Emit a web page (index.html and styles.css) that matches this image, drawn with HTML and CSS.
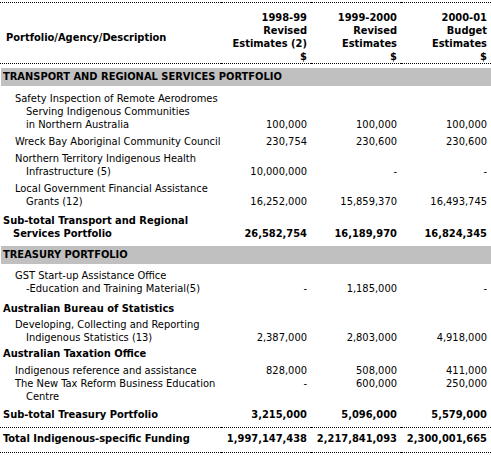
FILE: index.html
```html
<!DOCTYPE html>
<html lang="en">
<head>
  <meta charset="UTF-8">
  <title>Indigenous-specific Funding</title>
  <link rel="stylesheet" href="styles.css">
</head>
<body>
  <table class="funding">
    <colgroup>
      <col class="col-desc">
      <col class="col-num">
      <col class="col-num">
      <col class="col-num">
    </colgroup>
    <thead>
      <tr class="head">
        <th class="desc">Portfolio/Agency/Description</th>
        <th>1998-99<br>Revised<br>Estimates (2)<br>$</th>
        <th>1999-2000<br>Revised<br>Estimates<br>$</th>
        <th>2000-01<br>Budget<br>Estimates<br>$</th>
      </tr>
    </thead>
    <tbody>
      <tr class="band gap4">
        <td colspan="4"><div>TRANSPORT AND REGIONAL SERVICES PORTFOLIO</div></td>
      </tr>
      <tr class="gap6">
        <td class="desc">Safety Inspection of Remote Aerodromes<br>Serving Indigenous Communities<br>in Northern Australia</td>
        <td>100,000</td>
        <td>100,000</td>
        <td>100,000</td>
      </tr>
      <tr class="gap4">
        <td class="desc">Wreck Bay Aboriginal Community Council</td>
        <td>230,754</td>
        <td>230,600</td>
        <td>230,600</td>
      </tr>
      <tr class="gap4">
        <td class="desc">Northern Territory Indigenous Health<br>Infrastructure (5)</td>
        <td>10,000,000</td>
        <td>-</td>
        <td>-</td>
      </tr>
      <tr class="gap4">
        <td class="desc">Local Government Financial Assistance<br>Grants (12)</td>
        <td>16,252,000</td>
        <td>15,859,370</td>
        <td>16,493,745</td>
      </tr>
      <tr class="subtotal gap6">
        <td class="desc">Sub-total Transport and Regional<br>Services Portfolio</td>
        <td>26,582,754</td>
        <td>16,189,970</td>
        <td>16,824,345</td>
      </tr>
      <tr class="band gap6">
        <td colspan="4"><div>TREASURY PORTFOLIO</div></td>
      </tr>
      <tr class="gap5">
        <td class="desc">GST Start-up Assistance Office<br>-Education and Training Material(5)</td>
        <td>-</td>
        <td>1,185,000</td>
        <td>-</td>
      </tr>
      <tr class="agency gap7">
        <td class="desc" colspan="4">Australian Bureau of Statistics</td>
      </tr>
      <tr class="gap3">
        <td class="desc">Developing, Collecting and Reporting<br>Indigenous Statistics (13)</td>
        <td>2,387,000</td>
        <td>2,803,000</td>
        <td>4,918,000</td>
      </tr>
      <tr class="agency gap3">
        <td class="desc" colspan="4">Australian Taxation Office</td>
      </tr>
      <tr class="gap4">
        <td class="desc">Indigenous reference and assistance</td>
        <td>828,000</td>
        <td>508,000</td>
        <td>411,000</td>
      </tr>
      <tr>
        <td class="desc">The New Tax Reform Business Education<br>Centre</td>
        <td class="top">-</td>
        <td class="top">600,000</td>
        <td class="top">250,000</td>
      </tr>
      <tr class="subtotal gap5 last">
        <td class="desc">Sub-total Treasury Portfolio</td>
        <td>3,215,000</td>
        <td>5,096,000</td>
        <td>5,579,000</td>
      </tr>
    </tbody>
    <tfoot>
      <tr class="total">
        <td class="desc">Total Indigenous-specific Funding</td>
        <td>1,997,147,438</td>
        <td>2,217,841,093</td>
        <td>2,300,001,665</td>
      </tr>
    </tfoot>
  </table>
</body>
</html>
```

FILE: styles.css
```css
body {
  margin: 0;
  background: #fff;
  color: #000;
  font-family: "DejaVu Sans Condensed", "DejaVu Sans", sans-serif;
  font-size: 11px;
  line-height: 13px;
}

.funding {
  width: 491px;
  margin-top: 2px;
  border-collapse: collapse;
  table-layout: fixed;
}

.col-desc { width: 221px; }
.col-num { width: 90px; }

th, td {
  padding: 0 4px 0 0;
  text-align: right;
  vertical-align: bottom;
  font-weight: normal;
  white-space: nowrap;
}

td.top { vertical-align: top; }

/* header */
.head th {
  font-weight: bold;
  padding-top: 8px;
  border-top: 1px dotted #000;
  border-bottom: 1px dotted #000;
}

.head th.desc {
  text-align: left;
  vertical-align: middle;
  padding-left: 6px;
}

/* description column, wrapped lines hang under the first */
td.desc {
  text-align: left;
  padding-left: 26px;
  text-indent: -11px;
}

/* grey portfolio bands */
.band td {
  padding-right: 0;
}

.band div {
  margin-left: 1px;
  height: 18px;
  line-height: 18px;
  padding-left: 2px;
  background: #c0c0c0;
  font-weight: bold;
  text-align: left;
}

.agency td.desc {
  font-weight: bold;
  padding-left: 3px;
  text-indent: 0;
}

.subtotal td { font-weight: bold; }

.subtotal td.desc {
  padding-left: 13px;
  text-indent: -10px;
}

.last td { padding-bottom: 6px; }

.total td {
  font-weight: bold;
  padding-top: 4px;
  padding-bottom: 7px;
  border-top: 1px dotted #000;
  border-bottom: 1px dotted #000;
}

.total td.desc {
  padding-left: 3px;
  text-indent: 0;
}

.gap3 td { padding-top: 3px; }
.gap4 td { padding-top: 4px; }
.gap5 td { padding-top: 5px; }
.gap6 td { padding-top: 6px; }
.gap7 td { padding-top: 7px; }
```
